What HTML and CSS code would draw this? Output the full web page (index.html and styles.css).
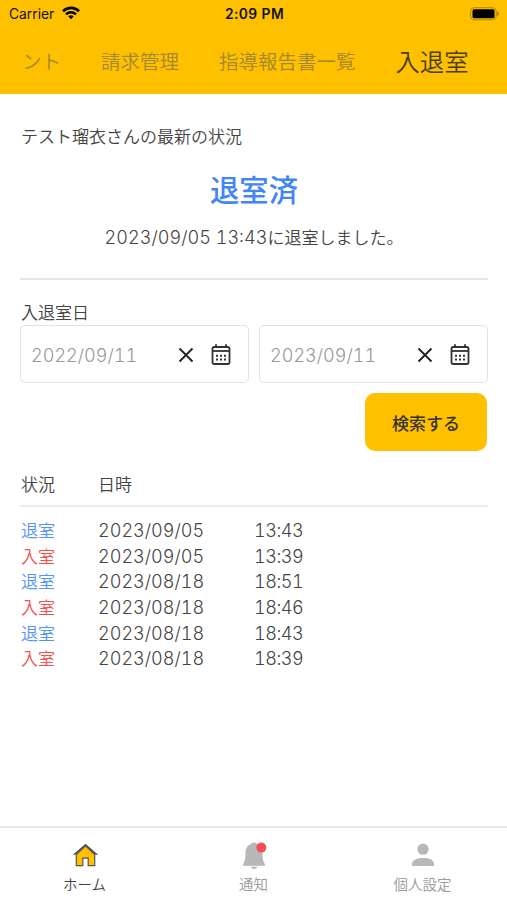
FILE: index.html
```html
<!DOCTYPE html>
<html lang="ja">
<head>
    <meta charset="UTF-8">
    <meta name="viewport" content="width=device-width, initial-scale=1.0">
    <title>入退室</title>
    <link rel="stylesheet" href="styles.css">
</head>
<body>
    <header class="header">
        <div class="status-bar">
            <div class="carrier">
                <span>Carrier</span>
                <svg class="wifi" viewBox="0 0 18 14" fill="none" stroke="#000" stroke-width="2.6">
                    <path d="M1 5.2C5.5 .8 12.500 .8 17 5.200"/>
                    <path d="M4 8.400c2.900-2.700 7.100-2.700 10 0"/>
                    <path d="M6.300 10.300L9 13.300l2.700-3c-1.500-1.300-3.900-1.300-5.400 0z" fill="#000" stroke="none"/>
                </svg>
            </div>
            <div class="clock">2:09 PM</div>
            <svg class="battery" viewBox="0 0 31 14">
                <rect x="1.700" y=".7" width="25.500" height="12.100" rx="3.500" fill="none" stroke="#8a6a05" stroke-opacity=".65"/>
                <rect x="3.500" y="2.300" width="22" height="8.900" rx="1.500" fill="#000"/>
                <path d="M28.300 4.600v4.400c2-.8 2-3.600 0-4.400z" fill="#8a6a05"/>
            </svg>
        </div>
        <nav class="tabs">
            <span class="tab">ント</span>
            <span class="tab">請求管理</span>
            <span class="tab">指導報告書一覧</span>
            <span class="tab active">入退室</span>
        </nav>
    </header>

    <main class="content">
        <section class="latest">
            <p class="latest-title">テスト瑠衣さんの最新の状況</p>
            <p class="latest-status">退室済</p>
            <p class="latest-detail"><span class="num">2023/09/05 13:43</span>に退室しました。</p>
        </section>

        <section class="search">
            <p class="search-label">入退室日</p>
            <div class="date-row">
                <div class="date-box">
                    <span class="date-value num">2022/09/11</span>
                    <svg class="clear-icon" viewBox="0 0 16 16"><path d="M1.500 1.500l13 13M14.500 1.500l-13 13"/></svg>
                    <svg class="calendar-icon" viewBox="0 0 20 22">
                        <rect x="1.500" y="3" width="17" height="17" rx="1.800" fill="none" stroke="#333" stroke-width="1.800"/>
                        <path d="M1.500 7h17" stroke="#333" stroke-width="1.800"/>
                        <path d="M5 .3v3M15 .3v3" stroke="#333" stroke-width="1.800"/>
                        <path d="M5 11.800h10M5 15.600h10" stroke="#333" stroke-width="2" stroke-dasharray="2 2"/>
                    </svg>
                </div>
                <div class="date-box">
                    <span class="date-value num">2023/09/11</span>
                    <svg class="clear-icon" viewBox="0 0 16 16"><path d="M1.500 1.500l13 13M14.500 1.500l-13 13"/></svg>
                    <svg class="calendar-icon" viewBox="0 0 20 22">
                        <rect x="1.500" y="3" width="17" height="17" rx="1.800" fill="none" stroke="#333" stroke-width="1.800"/>
                        <path d="M1.500 7h17" stroke="#333" stroke-width="1.800"/>
                        <path d="M5 .3v3M15 .3v3" stroke="#333" stroke-width="1.800"/>
                        <path d="M5 11.800h10M5 15.600h10" stroke="#333" stroke-width="2" stroke-dasharray="2 2"/>
                    </svg>
                </div>
            </div>
            <button class="search-button">検索する</button>
        </section>

        <section class="history">
            <div class="history-head"><span>状況</span><span>日時</span></div>
            <div class="history-row"><span class="out">退室</span><span class="num">2023/09/05</span><span class="num time">13:43</span></div>
            <div class="history-row"><span class="in">入室</span><span class="num">2023/09/05</span><span class="num time">13:39</span></div>
            <div class="history-row"><span class="out">退室</span><span class="num">2023/08/18</span><span class="num time">18:51</span></div>
            <div class="history-row"><span class="in">入室</span><span class="num">2023/08/18</span><span class="num time">18:46</span></div>
            <div class="history-row"><span class="out">退室</span><span class="num">2023/08/18</span><span class="num time">18:43</span></div>
            <div class="history-row"><span class="in">入室</span><span class="num">2023/08/18</span><span class="num time">18:39</span></div>
        </section>
    </main>

    <footer class="bottom-nav">
        <div class="nav-item active">
            <svg class="nav-icon" viewBox="0 0 28 28">
                <path d="M5.300 12.500v11.200h6.500v-7.500h5.400v7.500h6.500V12.500l-9.200-8.700z" fill="#ffc000" stroke="#555" stroke-width="1.200"/>
                <path d="M1.800 12.800L14.500 1.800l12.700 11h-2.600l-10.100-8.600-10.100 8.600z" fill="#555"/>
            </svg>
            <span>ホーム</span>
        </div>
        <div class="nav-item">
            <svg class="nav-icon" viewBox="0 0 28 28">
                <path d="M10.800 2.300C11-.2 17-.2 17.200 2.300c3.800 1.300 5.300 4.500 5.300 8.500 0 5.500.7 8.600 2.500 11.700v1.300H3v-1.300c1.800-3.100 2.500-6.200 2.500-11.700 0-4 1.500-7.200 5.300-8.500z" fill="#b8b8b8"/>
                <path d="M10.800 24.800h6.400c-.5 2.800-5.900 2.800-6.400 0z" fill="#b8b8b8"/>
                <circle cx="21.300" cy="5.600" r="5" fill="#f05055"/>
            </svg>
            <span>通知</span>
        </div>
        <div class="nav-item">
            <svg class="nav-icon" viewBox="0 0 28 28">
                <circle cx="14" cy="7.200" r="5.600" fill="#b8b8b8"/>
                <path d="M3 24v-2.400c0-3.600 5.500-5.600 11-5.600s11 2 11 5.600V24z" fill="#b8b8b8"/>
            </svg>
            <span>個人設定</span>
        </div>
    </footer>
</body>
</html>
```
FILE: styles.css
```css
* {
    box-sizing: border-box;
}

body {
    margin: 0;
    height: 900px;
    display: flex;
    flex-direction: column;
    background-color: #fff;
    color: #444;
    font-family: "Noto Sans CJK JP", sans-serif;
    font-weight: 350;
    font-size: 17px;
    overflow: hidden;
}

p {
    margin: 0;
}

/* 数字は等幅で表示 */
.num {
    font-family: Inter, sans-serif;
    font-size: 18.1px;
    font-weight: 300;
    font-variant-numeric: tabular-nums;
}

.header {
    height: 94px;
    background-color: #ffc000;
    flex-shrink: 0;
}

.status-bar {
    height: 27px;
    padding: 0 7px 0 9px;
    display: grid;
    grid-template-columns: 1fr auto 1fr;
    align-items: center;
    font-family: Inter, sans-serif;
    font-size: 13.8px;
    font-weight: 400;
    color: #111;
}

.carrier {
    display: flex;
    align-items: center;
    gap: 8px;
}

.wifi {
    width: 18px;
    height: 14px;
    margin-top: -2px;
}

.clock {
    font-weight: 600;
    letter-spacing: 0.45px;
}

.battery {
    width: 31px;
    height: 14px;
    justify-self: end;
}

.tabs {
    height: 67px;
    padding-left: 22px;
    display: flex;
    align-items: center;
    gap: 40px;
    white-space: nowrap;
}

.tab {
    font-size: 19.5px;
    line-height: 36px;
    color: #a38731;
}

.tab.active {
    font-size: 24.3px;
    color: #4a3d14;
}

.content {
    flex: 1;
    padding: 0 19px 0 20px;
}

.latest {
    height: 186px;
    padding-top: 29px;
    border-bottom: 2px solid #e6e6e6;
}

.latest-title {
    line-height: 26px;
    padding-left: 1px;
}

.latest-status {
    margin-top: 17px;
    line-height: 44px;
    font-size: 29.3px;
    font-weight: 500;
    color: #4286f5;
    text-align: center;
}

.latest-detail {
    margin-top: 14px;
    line-height: 26px;
    text-align: center;
}

.search {
    padding-top: 20px;
    display: flex;
    flex-direction: column;
}

.search-label {
    height: 25px;
    line-height: 24px;
    padding-left: 1px;
}

.date-row {
    display: grid;
    grid-template-columns: 1fr 1fr;
    gap: 10px;
}

.date-box {
    height: 58px;
    padding: 2px 17px 0 10px;
    display: flex;
    align-items: center;
    border: 1.5px solid #e2e2e2;
    border-radius: 5px;
}

.date-value {
    flex: 1;
    color: #999;
}

.clear-icon {
    width: 16px;
    height: 16px;
    margin-right: 17px;
    stroke: #222;
    stroke-width: 1.9;
}

.calendar-icon {
    width: 20px;
    height: 22px;
}

.search-button {
    align-self: flex-end;
    width: 122px;
    height: 58px;
    margin: 10px 1px 0 0;
    padding: 0;
    border: none;
    border-radius: 10px;
    background-color: #ffc000;
    color: #333;
    font-family: inherit;
    font-size: 17px;
    font-weight: 500;
}

.history {
    padding-top: 18px;
}

.history-head, .history-row {
    display: grid;
    grid-template-columns: 78px 156px 1fr;
}

.history-head {
    height: 38px;
    line-height: 30px;
    margin-bottom: 10px;
    border-bottom: 2px solid #ededed;
}

.history-row {
    height: 25.65px;
    line-height: 26px;
}

.history-head span:first-child, .out, .in {
    padding-left: 1px;
}

.time {
    letter-spacing: -0.5px;
}

.out {
    color: #5594f7;
}

.in {
    color: #ef5350;
}

.bottom-nav {
    height: 74px;
    padding-top: 14px;
    display: grid;
    grid-template-columns: repeat(3, 1fr);
    border-top: 2px solid #e8e8e8;
    flex-shrink: 0;
}

.nav-item {
    display: flex;
    flex-direction: column;
    align-items: center;
    color: #999;
    font-size: 14.5px;
    line-height: 20px;
}

.nav-item.active {
    color: #444;
}

.nav-icon {
    width: 28px;
    height: 28px;
    margin-bottom: 4px;
}
```
